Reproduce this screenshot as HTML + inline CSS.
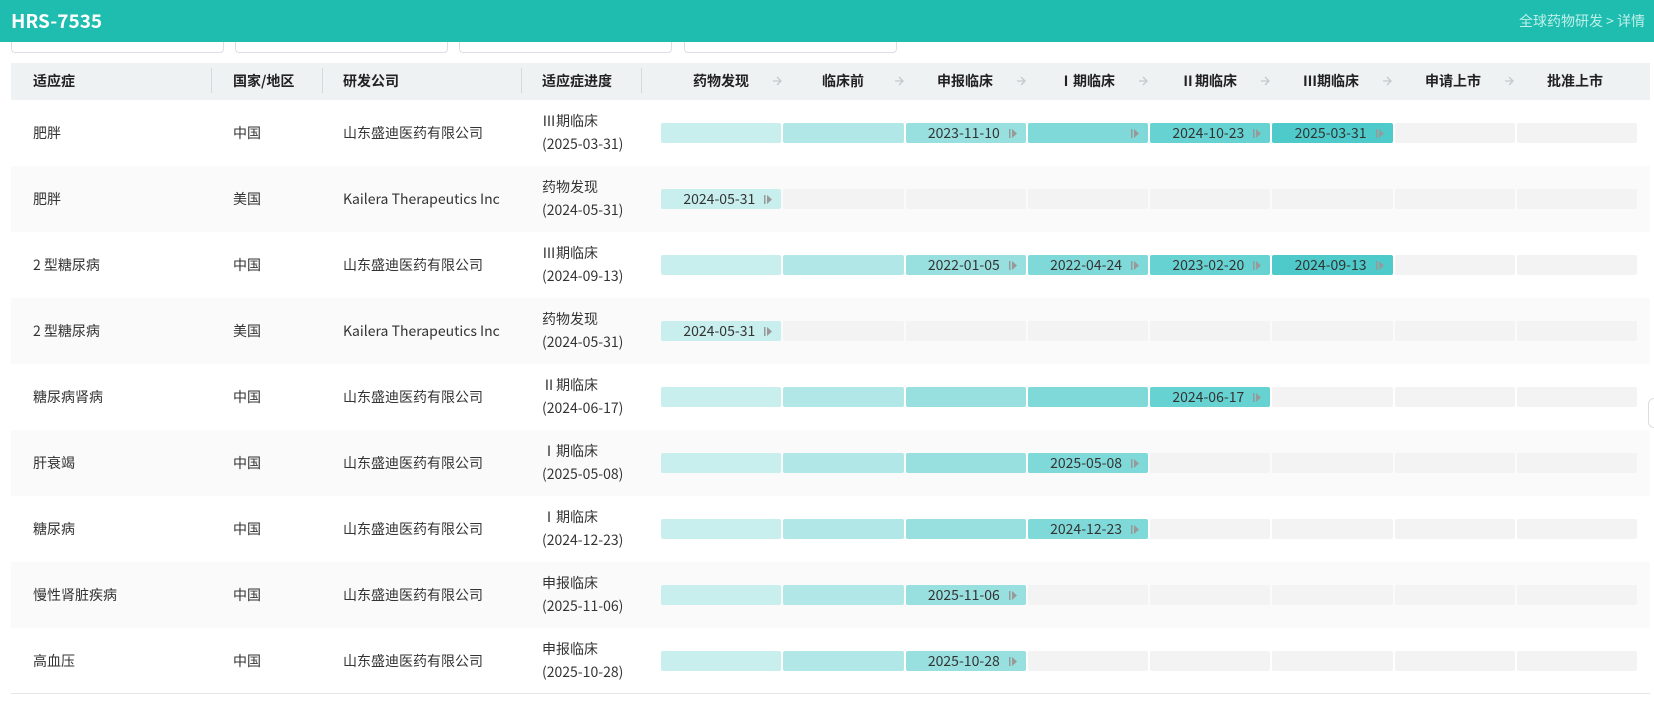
<!DOCTYPE html>
<html><head><meta charset="utf-8"><style>
*{margin:0;padding:0;box-sizing:border-box}
body{width:1654px;height:710px;overflow:hidden;background:#fff;font-family:"Noto Sans CJK SC","Liberation Sans",sans-serif;color:#333;font-size:14px;position:relative;line-height:20px}
.top{position:absolute;left:0;top:0;width:1654px;height:42px;background:#1fbdb0;z-index:5}
.top .t{position:absolute;left:11px;top:8px;font-size:19px;line-height:26px;font-weight:bold;color:#fff}
.top .b{position:absolute;right:9px;top:11px;font-size:14px;color:#bdf0e9}
.f{position:absolute;top:22px;height:31px;width:213px;border:1px solid #dcdfe6;border-radius:4px}
.th{position:absolute;left:11px;top:63px;width:1639px;height:37px;background:#eef2f3;font-weight:bold;font-size:14px;color:#222}
.th span{position:absolute;top:8px}
.dv{position:absolute;top:5px;width:1px;height:25px;background:#d5d9db}
.sl{position:absolute;top:8px;width:120px;text-align:center}
.ar{position:absolute;top:13px}
.r{position:absolute;left:11px;width:1639px;height:66px}
.r.g{background:#fafafa}
.r span{position:absolute;top:23px}
.r .p{top:10px;line-height:23px}
.cs{position:absolute;left:650px;top:23px;display:flex;gap:2px}
.c{width:120.25px;height:20px;border-radius:2px;background:#f3f3f3;display:flex;justify-content:flex-end;align-items:center;padding-right:9px;font-size:14px;color:#333}
.c svg{margin-left:9px}
.a{background:#c9eeee}.b2{background:#b1e7e7}.c3{background:#98dfdf}.d{background:#80d9d9}.e{background:#67d2d2}.f6{background:#4ecaca}
.bl{position:absolute;left:11px;top:693px;width:1639px;height:1px;background:#e6e6e6}
.h{position:absolute;left:1648px;top:398px;width:12px;height:30px;border:1px solid #ddd;border-radius:6px;background:#fff}
</style></head><body>
<div class="top"><div class="t">HRS-7535</div><div class="b">全球药物研发 &gt; 详情</div></div>
<div class="f" style="left:11px"></div><div class="f" style="left:235px"></div><div class="f" style="left:459px"></div><div class="f" style="left:684px"></div>
<div class="th">
<span style="left:22px">适应症</span><div class="dv" style="left:200px"></div>
<span style="left:222px">国家/地区</span><div class="dv" style="left:311px"></div>
<span style="left:332px">研发公司</span><div class="dv" style="left:510px"></div>
<span style="left:531px">适应症进度</span><div class="dv" style="left:630px"></div>
<div class="sl" style="left:650px">药物发现</div><svg class="ar" style="left:762px" width="9" height="10"><path d="M0 5H8M4 1L8 5L4 9" stroke="#c5c9cb" stroke-width="1.3" fill="none"/></svg>
<div class="sl" style="left:772px">临床前</div><svg class="ar" style="left:884px" width="9" height="10"><path d="M0 5H8M4 1L8 5L4 9" stroke="#c5c9cb" stroke-width="1.3" fill="none"/></svg>
<div class="sl" style="left:894px">申报临床</div><svg class="ar" style="left:1006px" width="9" height="10"><path d="M0 5H8M4 1L8 5L4 9" stroke="#c5c9cb" stroke-width="1.3" fill="none"/></svg>
<div class="sl" style="left:1016px">Ⅰ期临床</div><svg class="ar" style="left:1128px" width="9" height="10"><path d="M0 5H8M4 1L8 5L4 9" stroke="#c5c9cb" stroke-width="1.3" fill="none"/></svg>
<div class="sl" style="left:1138px">Ⅱ期临床</div><svg class="ar" style="left:1250px" width="9" height="10"><path d="M0 5H8M4 1L8 5L4 9" stroke="#c5c9cb" stroke-width="1.3" fill="none"/></svg>
<div class="sl" style="left:1260px">Ⅲ期临床</div><svg class="ar" style="left:1372px" width="9" height="10"><path d="M0 5H8M4 1L8 5L4 9" stroke="#c5c9cb" stroke-width="1.3" fill="none"/></svg>
<div class="sl" style="left:1382px">申请上市</div><svg class="ar" style="left:1494px" width="9" height="10"><path d="M0 5H8M4 1L8 5L4 9" stroke="#c5c9cb" stroke-width="1.3" fill="none"/></svg>
<div class="sl" style="left:1504px">批准上市</div>
</div>

<div class="r" style="top:100px"><span style="left:22px">肥胖</span><span style="left:222px">中国</span><span style="left:332px">山东盛迪医药有限公司</span><span class="p" style="left:531px">Ⅲ期临床<br>(2025-03-31)</span>
<div class="cs"><div class="c a"></div><div class="c b2"></div><div class="c c3">2023-11-10<svg width="8" height="9"><rect x="0" y="0" width="1.5" height="9" fill="#999"/><path d="M3 0L8 4.5L3 9Z" fill="#999"/></svg></div><div class="c d"><svg width="8" height="9"><rect x="0" y="0" width="1.5" height="9" fill="#999"/><path d="M3 0L8 4.5L3 9Z" fill="#999"/></svg></div><div class="c e">2024-10-23<svg width="8" height="9"><rect x="0" y="0" width="1.5" height="9" fill="#999"/><path d="M3 0L8 4.5L3 9Z" fill="#999"/></svg></div><div class="c f6">2025-03-31<svg width="8" height="9"><rect x="0" y="0" width="1.5" height="9" fill="#999"/><path d="M3 0L8 4.5L3 9Z" fill="#999"/></svg></div><div class="c"></div><div class="c"></div></div></div>

<div class="r g" style="top:166px"><span style="left:22px">肥胖</span><span style="left:222px">美国</span><span style="left:332px">Kailera Therapeutics Inc</span><span class="p" style="left:531px">药物发现<br>(2024-05-31)</span>
<div class="cs"><div class="c a">2024-05-31<svg width="8" height="9"><rect x="0" y="0" width="1.5" height="9" fill="#999"/><path d="M3 0L8 4.5L3 9Z" fill="#999"/></svg></div><div class="c"></div><div class="c"></div><div class="c"></div><div class="c"></div><div class="c"></div><div class="c"></div><div class="c"></div></div></div>

<div class="r" style="top:232px"><span style="left:22px">2 型糖尿病</span><span style="left:222px">中国</span><span style="left:332px">山东盛迪医药有限公司</span><span class="p" style="left:531px">Ⅲ期临床<br>(2024-09-13)</span>
<div class="cs"><div class="c a"></div><div class="c b2"></div><div class="c c3">2022-01-05<svg width="8" height="9"><rect x="0" y="0" width="1.5" height="9" fill="#999"/><path d="M3 0L8 4.5L3 9Z" fill="#999"/></svg></div><div class="c d">2022-04-24<svg width="8" height="9"><rect x="0" y="0" width="1.5" height="9" fill="#999"/><path d="M3 0L8 4.5L3 9Z" fill="#999"/></svg></div><div class="c e">2023-02-20<svg width="8" height="9"><rect x="0" y="0" width="1.5" height="9" fill="#999"/><path d="M3 0L8 4.5L3 9Z" fill="#999"/></svg></div><div class="c f6">2024-09-13<svg width="8" height="9"><rect x="0" y="0" width="1.5" height="9" fill="#999"/><path d="M3 0L8 4.5L3 9Z" fill="#999"/></svg></div><div class="c"></div><div class="c"></div></div></div>

<div class="r g" style="top:298px"><span style="left:22px">2 型糖尿病</span><span style="left:222px">美国</span><span style="left:332px">Kailera Therapeutics Inc</span><span class="p" style="left:531px">药物发现<br>(2024-05-31)</span>
<div class="cs"><div class="c a">2024-05-31<svg width="8" height="9"><rect x="0" y="0" width="1.5" height="9" fill="#999"/><path d="M3 0L8 4.5L3 9Z" fill="#999"/></svg></div><div class="c"></div><div class="c"></div><div class="c"></div><div class="c"></div><div class="c"></div><div class="c"></div><div class="c"></div></div></div>

<div class="r" style="top:364px"><span style="left:22px">糖尿病肾病</span><span style="left:222px">中国</span><span style="left:332px">山东盛迪医药有限公司</span><span class="p" style="left:531px">Ⅱ期临床<br>(2024-06-17)</span>
<div class="cs"><div class="c a"></div><div class="c b2"></div><div class="c c3"></div><div class="c d"></div><div class="c e">2024-06-17<svg width="8" height="9"><rect x="0" y="0" width="1.5" height="9" fill="#999"/><path d="M3 0L8 4.5L3 9Z" fill="#999"/></svg></div><div class="c"></div><div class="c"></div><div class="c"></div></div></div>

<div class="r g" style="top:430px"><span style="left:22px">肝衰竭</span><span style="left:222px">中国</span><span style="left:332px">山东盛迪医药有限公司</span><span class="p" style="left:531px">Ⅰ期临床<br>(2025-05-08)</span>
<div class="cs"><div class="c a"></div><div class="c b2"></div><div class="c c3"></div><div class="c d">2025-05-08<svg width="8" height="9"><rect x="0" y="0" width="1.5" height="9" fill="#999"/><path d="M3 0L8 4.5L3 9Z" fill="#999"/></svg></div><div class="c"></div><div class="c"></div><div class="c"></div><div class="c"></div></div></div>

<div class="r" style="top:496px"><span style="left:22px">糖尿病</span><span style="left:222px">中国</span><span style="left:332px">山东盛迪医药有限公司</span><span class="p" style="left:531px">Ⅰ期临床<br>(2024-12-23)</span>
<div class="cs"><div class="c a"></div><div class="c b2"></div><div class="c c3"></div><div class="c d">2024-12-23<svg width="8" height="9"><rect x="0" y="0" width="1.5" height="9" fill="#999"/><path d="M3 0L8 4.5L3 9Z" fill="#999"/></svg></div><div class="c"></div><div class="c"></div><div class="c"></div><div class="c"></div></div></div>

<div class="r g" style="top:562px"><span style="left:22px">慢性肾脏疾病</span><span style="left:222px">中国</span><span style="left:332px">山东盛迪医药有限公司</span><span class="p" style="left:531px">申报临床<br>(2025-11-06)</span>
<div class="cs"><div class="c a"></div><div class="c b2"></div><div class="c c3">2025-11-06<svg width="8" height="9"><rect x="0" y="0" width="1.5" height="9" fill="#999"/><path d="M3 0L8 4.5L3 9Z" fill="#999"/></svg></div><div class="c"></div><div class="c"></div><div class="c"></div><div class="c"></div><div class="c"></div></div></div>

<div class="r" style="top:628px"><span style="left:22px">高血压</span><span style="left:222px">中国</span><span style="left:332px">山东盛迪医药有限公司</span><span class="p" style="left:531px">申报临床<br>(2025-10-28)</span>
<div class="cs"><div class="c a"></div><div class="c b2"></div><div class="c c3">2025-10-28<svg width="8" height="9"><rect x="0" y="0" width="1.5" height="9" fill="#999"/><path d="M3 0L8 4.5L3 9Z" fill="#999"/></svg></div><div class="c"></div><div class="c"></div><div class="c"></div><div class="c"></div><div class="c"></div></div></div>

<div class="bl"></div>
<div class="h"></div>
</body></html>
